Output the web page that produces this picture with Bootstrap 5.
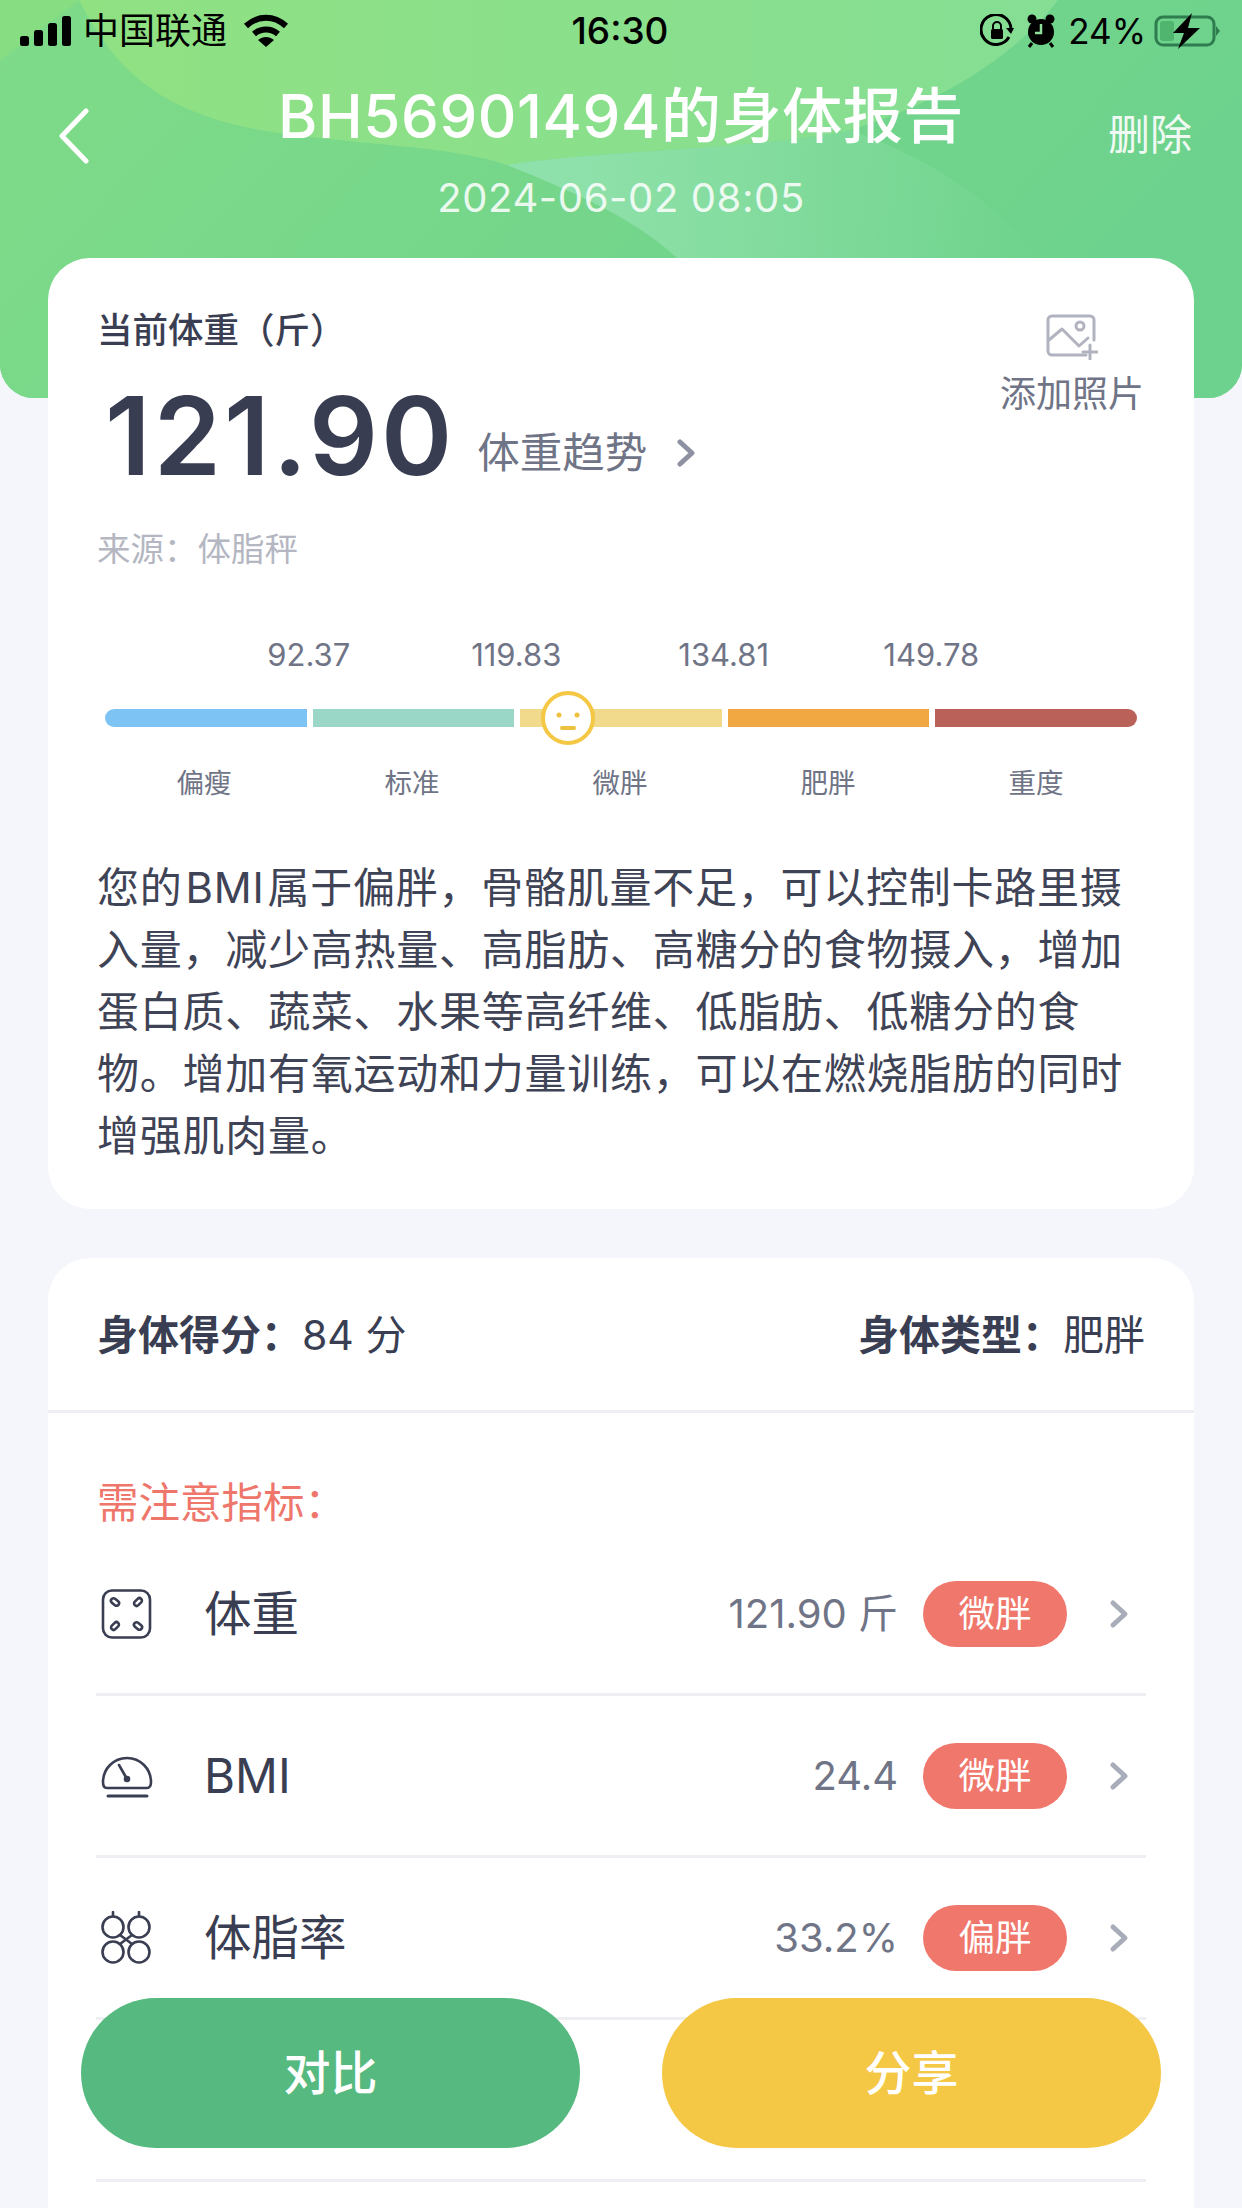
<!DOCTYPE html>
<html lang="zh-CN">
<head>
    <meta charset="UTF-8" />
    <title>身体报告</title>
    <meta name="viewport" content="width=device-width, initial-scale=1" />
    <link href="https://cdn.jsdelivr.net/npm/bootstrap@5.3.0/dist/css/bootstrap.min.css" rel="stylesheet" />
    <style>
    html, body { height: 2208px; overflow: hidden; }
    body {
      background-color: #f4f6fb;
      color: #3a3e52;
      font-family: Inter, "Noto Sans CJK SC", sans-serif;
      position: relative;
    }
    .hero {
      height: 398px;
      position: relative;
      overflow: hidden;
      border-radius: 0 0 34px 34px;
      background: #6fd48d;
      color: #fff;
    }
    .hero-bg { position: absolute; inset: 0; width: 100%; height: 100%; }
    .hero-inner { position: relative; }
    .status-bar { height: 62px; padding: 0 22px 0 20px; color: #000; font-size: 36px; }
    .status-side { width: 440px; }
    .status-time { font-weight: 500; font-size: 37px; }
    .status-pct { font-size: 35px; margin-left: 12px; }
    .status-alarm { margin-left: 12px; }
    .status-carrier { margin-left: 11px; }
    .hero-nav { padding: 0 50px; height: 176px; }
    .hero-side { width: 120px; }
    .hero-back { margin-top: 46px; padding-left: 8px; }
    .hero-title { font-size: 60px; font-weight: 500; line-height: 70px; margin-top: 19px; letter-spacing: .6px; white-space: nowrap; }
    .hero-date { font-size: 40px; line-height: 56px; margin-top: 19px; opacity: .85; letter-spacing: .6px; }
    .hero-del { font-size: 42px; margin-top: 43px; line-height: 60px; opacity: .9; text-align: right; }
    .sheet { margin: 0 48px; border: 0; border-radius: 42px; background: #fff; }
    .sheet-weight { margin-top: -140px; padding: 52px 49px 42px; position: relative; }
    .weight-label { font-size: 35.5px; line-height: 42px; font-weight: 500; }
    .weight-num { font-size: 108px; line-height: 120px; font-weight: 600; color: #383d52; letter-spacing: 3px; margin-left: 8px; }
    .weight-trend { font-size: 42.5px; color: #6f7486; margin-left: 22px; margin-top: 34px; }
    .weight-chev { margin-left: 30px; margin-top: 34px; }
    .weight-src { font-size: 33.5px; line-height: 44px; color: #b4b7c2; margin-top: 31px; }
    .add-photo-icon { margin-top: 4px; }
    .add-photo { font-size: 36px; color: #6f7486; line-height: 50px; margin-top: 9px; margin-right: 1px; }
    .scale-wrap { margin: 64px 8px 0; }
    .scale-values { height: 40px; font-size: 31px; line-height: 40px; color: #6f7486; padding: 0 100px; }
    .scale-values span { width: 207.5px; text-align: center; }
    .scale-bar { height: 18px; margin-top: 34px; gap: 6px; position: relative; }
    .scale-seg { flex: 1; }
    .scale-seg-first { border-radius: 9px 0 0 9px; }
    .scale-seg-last { border-radius: 0 9px 9px 0; }
    .scale-face { position: absolute; left: 436px; top: -18px; width: 54px; height: 54px; }
    .scale-names { margin: 38px -3px 0 -5px; font-size: 27.5px; line-height: 36px; color: #6f7486; }
    .scale-names span { flex: 1; text-align: center; }
    .summary { margin-top: 56px; font-size: 42px; line-height: 62px; letter-spacing: .75px; color: #3f4356; }
    .summary-latin { margin: 0 3px; }
    .sheet-index { margin-top: 49px; height: 951px; border-radius: 42px 42px 0 0; }
    .score-row { height: 155px; padding: 3px 49px 0; font-size: 41px; border-bottom: 3px solid #eeeff3; }
    .score-row b { font-weight: 600; }
    .alert-title { margin: 68px 49px 0; font-size: 41.5px; line-height: 44px; color: #ee766b; }
    .index-list { margin: 9px 48px 0; }
    .index-row { height: 162px; border-bottom: 3px solid #eeeff3; }
    .index-icon { width: 54px; margin-left: 4px; }
    .index-name { font-size: 47.5px; margin-left: 50px; }
    .index-val { font-size: 40px; color: #6f7486; margin-right: 25px; }
    .index-tag { width: 144px; height: 66px; line-height: 66px; padding: 0; font-size: 36.5px; font-weight: 400; background: #f0776c; margin-right: 42px; }
    .index-chev { margin-right: 17px; }
    .float-bar { position: absolute; top: 1998px; left: 81px; right: 81px; }
    .float-btn { width: 499px; height: 150px; border: 0; font-size: 47px; font-weight: 500; color: #fff; }
    .float-btn:hover { color: #fff; }
    .btn-compare { background: #56b97f; }
    .btn-share { background: #f4c744; }
  </style>
</head>
<body>

<div class="hero">
    <svg class="hero-bg" viewBox="0 0 1242 398" preserveAspectRatio="none">
        <defs>
            <linearGradient id="heroGrad" x1="0" y1="0" x2="1" y2="0.3">
                <stop offset="0" stop-color="#7fdb88" />
                <stop offset="1" stop-color="#6dd28d" />
            </linearGradient>
            <linearGradient id="heroTop" x1="0" y1="0" x2="1" y2="0">
                <stop offset="0" stop-color="#90e182" />
                <stop offset="1" stop-color="#85de94" />
            </linearGradient>
            <linearGradient id="heroWedge" x1="0" y1="0" x2="1" y2="0">
                <stop offset="0.1" stop-color="#8fe1ab" />
                <stop offset="1" stop-color="#8fe1ab" stop-opacity="0" />
            </linearGradient>
        </defs>
        <rect width="1242" height="398" fill="url(#heroGrad)" />
        <path d="M0 0H79L0 60Z" fill="#87de82" />
        <path d="M79 0C110 60 150 110 260 130C350 145 450 145 507 165C600 150 760 150 850 130C950 100 1020 50 1058 0Z" fill="url(#heroTop)" />
        <path d="M507 165C570 190 640 220 681 262H1040C1010 220 960 170 850 130C760 150 600 150 507 165Z" fill="url(#heroWedge)" />
    </svg>
    <div class="hero-inner">
        <div class="status-bar d-flex justify-content-between align-items-center">
            <div class="status-side d-flex align-items-center">
                <svg width="52" height="32" viewBox="0 0 52 32"><rect x="0" y="21" width="9" height="10" rx="2.5" /><rect x="14" y="15" width="9" height="16" rx="2.5" /><rect x="28" y="8" width="9" height="23" rx="2.5" /><rect x="42" y="1" width="9" height="30" rx="2.5" /></svg>
                <span class="status-carrier">中国联通</span>
                <svg class="ms-3" width="46" height="34" viewBox="0 0 46 34" fill="none" stroke="#000" stroke-width="6"><path d="M3 12C15 1 31 1 43 12" /><path d="M11 20C18 14 28 14 35 20" /><path d="M23 33L15 26C20 22 26 22 31 26Z" fill="#000" stroke="none" /></svg>
            </div>
            <span class="status-time">16:30</span>
            <div class="status-side d-flex align-items-center justify-content-end">
                <svg width="34" height="34" viewBox="0 0 34 34" fill="none" stroke="#000" stroke-width="3"><path d="M29 23A15 15 0 1 1 31 15" /><path d="M26 14L31 20L34 14Z" fill="#000" stroke="none" /><rect x="11" y="15" width="12" height="10" rx="1.5" fill="#000" stroke="none" /><path d="M13 15V12A4 4 0 0 1 21 12V15" stroke-width="2" /></svg>
                <svg class="status-alarm" width="30" height="34" viewBox="0 0 30 34"><circle cx="15" cy="18" r="13" /><circle cx="6" cy="5" r="4.5" /><circle cx="24" cy="5" r="4.5" /><path d="M6 29L3 33M24 29L27 33" stroke="#000" stroke-width="3" /><path d="M15 10V19H9" stroke="#8ee09a" stroke-width="2.5" fill="none" /></svg>
                <span class="status-pct">24%</span>
                <svg class="ms-2" width="66" height="36" viewBox="0 0 66 36"><rect x="2" y="4" width="58" height="28" rx="7" fill="none" stroke="#2f7d4f" stroke-width="3" /><rect x="6" y="8" width="14" height="20" rx="3" fill="#4fb56f" /><path d="M62 13L66 18L62 23Z" fill="#2f7d4f" /><path d="M38 0L19 20H30L24 36L46 15H34Z" fill="#000" /></svg>
            </div>
        </div>
        <div class="hero-nav d-flex justify-content-between align-items-start">
            <div class="hero-side hero-back">
                <svg width="32" height="56" viewBox="0 0 32 56" fill="none" stroke="#fff" stroke-width="5" stroke-linecap="round" stroke-linejoin="round"><path d="M28 3L4 28L28 53" /></svg>
            </div>
            <div class="text-center">
                <div class="hero-title">BH56901494的身体报告</div>
                <div class="hero-date">2024-06-02 08:05</div>
            </div>
            <div class="hero-side hero-del">删除</div>
        </div>
    </div>
</div>

<div class="card sheet sheet-weight">
    <div class="d-flex justify-content-between align-items-start">
        <div>
            <div class="weight-label">当前体重（斤）</div>
            <div class="d-flex align-items-center mt-4">
                <span class="weight-num">121.90</span>
                <span class="weight-trend">体重趋势</span>
                <svg class="weight-chev" width="18" height="28" viewBox="0 0 18 28" fill="none" stroke="#8d91a1" stroke-width="5" stroke-linecap="round" stroke-linejoin="round"><path d="M3 3L15 14L3 25" /></svg>
            </div>
            <div class="weight-src">来源：体脂秤</div>
        </div>
        <div class="text-center">
            <svg class="add-photo-icon" width="52" height="46" viewBox="0 0 52 46" fill="none" stroke="#b1b4c0" stroke-width="3" stroke-linecap="round" stroke-linejoin="round"><path d="M40 41H6A4 4 0 0 1 2 37V6A4 4 0 0 1 6 2H44A4 4 0 0 1 48 6V26" /><path d="M3 26L16 15L33 32L42 24" /><circle cx="34" cy="12" r="4" /><path d="M44 31V45M37 38H51" /></svg>
            <div class="add-photo">添加照片</div>
        </div>
    </div>

    <div class="scale-wrap">
        <div class="scale-values d-flex">
            <span>92.37</span><span>119.83</span><span>134.81</span><span>149.78</span>
        </div>
        <div class="scale-bar d-flex">
            <div class="scale-seg scale-seg-first" style="background:#7dc4f5"></div>
            <div class="scale-seg" style="background:#9bd7c7"></div>
            <div class="scale-seg" style="background:#f2da8d"></div>
            <div class="scale-seg" style="background:#f1a842"></div>
            <div class="scale-seg scale-seg-last" style="background:#ba625a"></div>
            <svg class="scale-face" viewBox="0 0 54 54"><circle cx="27" cy="27" r="25" fill="#fff" stroke="#f4c744" stroke-width="4" /><circle cx="18" cy="24" r="2.5" fill="#f0c040" /><circle cx="36" cy="24" r="2.5" fill="#f0c040" /><rect x="19" y="35" width="16" height="4" rx="2" fill="#f0c040" /></svg>
        </div>
        <div class="scale-names d-flex">
            <span>偏瘦</span><span>标准</span><span>微胖</span><span>肥胖</span><span>重度</span>
        </div>
    </div>

    <div class="summary">您的<span class="summary-latin">BMI</span>属于偏胖，骨骼肌量不足，可以控制卡路里摄<br />入量，减少高热量、高脂肪、高糖分的食物摄入，增加<br />蛋白质、蔬菜、水果等高纤维、低脂肪、低糖分的食<br />物。增加有氧运动和力量训练，可以在燃烧脂肪的同时<br />增强肌肉量。</div>
</div>

<div class="card sheet sheet-index">
    <div class="score-row d-flex justify-content-between align-items-center">
        <div><b>身体得分：</b>84 分</div>
        <div><b>身体类型：</b>肥胖</div>
    </div>
    <div class="alert-title">需注意指标：</div>
    <div class="index-list">
        <div class="index-row d-flex align-items-center">
            <svg class="index-icon" height="50" viewBox="0 0 54 50" fill="none" stroke="#3a3e52" stroke-width="2.6"><rect x="3" y="1.5" width="47" height="47" rx="9" /><rect x="-4.5" y="-2.5" width="9" height="5" rx="2.5" transform="translate(15 13) rotate(40)" /><rect x="-4.5" y="-2.5" width="9" height="5" rx="2.5" transform="translate(38 13) rotate(-45)" /><rect x="-4.5" y="-2.5" width="9" height="5" rx="2.5" transform="translate(15 37) rotate(-45)" /><rect x="-4.5" y="-2.5" width="9" height="5" rx="2.5" transform="translate(38 37) rotate(40)" /></svg>
            <span class="index-name">体重</span>
            <span class="index-val ms-auto">121.90 斤</span>
            <span class="badge rounded-pill index-tag">微胖</span>
            <svg class="index-chev" width="20" height="30" viewBox="0 0 20 30" fill="none" stroke="#a9adba" stroke-width="5" stroke-linecap="round" stroke-linejoin="round"><path d="M4 4L16 15L4 26" /></svg>
        </div>
        <div class="index-row d-flex align-items-center">
            <svg class="index-icon" height="46" viewBox="0 0 54 46" fill="none" stroke="#3a3e52" stroke-width="2.6" stroke-linecap="round"><path d="M3 29A24 24 0 1 1 51 29C51 33 50 35 47 35H7C4 35 3 33 3 29Z" /><path d="M19 12L27 26" /><circle cx="27" cy="26" r="2" fill="#3a3e52" /><path d="M8 43H47" stroke-width="3" /></svg>
            <span class="index-name">BMI</span>
            <span class="index-val ms-auto">24.4</span>
            <span class="badge rounded-pill index-tag">微胖</span>
            <svg class="index-chev" width="20" height="30" viewBox="0 0 20 30" fill="none" stroke="#a9adba" stroke-width="5" stroke-linecap="round" stroke-linejoin="round"><path d="M4 4L16 15L4 26" /></svg>
        </div>
        <div class="index-row d-flex align-items-center">
            <svg class="index-icon" height="54" viewBox="0 0 54 54" fill="none" stroke="#3a3e52" stroke-width="2.6" stroke-linecap="round"><circle cx="13" cy="16" r="10.5" /><circle cx="39" cy="16" r="10.5" /><circle cx="13" cy="41" r="10.5" /><circle cx="39" cy="41" r="10.5" /><path d="M13 5V1M39 5V1M20 24L32 33M32 24L20 33" /></svg>
            <span class="index-name">体脂率</span>
            <span class="index-val ms-auto">33.2%</span>
            <span class="badge rounded-pill index-tag">偏胖</span>
            <svg class="index-chev" width="20" height="30" viewBox="0 0 20 30" fill="none" stroke="#a9adba" stroke-width="5" stroke-linecap="round" stroke-linejoin="round"><path d="M4 4L16 15L4 26" /></svg>
        </div>
        <div class="index-row"></div>
    </div>
</div>

<div class="float-bar d-flex justify-content-between">
    <button type="button" class="btn rounded-pill float-btn btn-compare">对比</button>
    <button type="button" class="btn rounded-pill float-btn btn-share">分享</button>
</div>

<script src="https://cdn.jsdelivr.net/npm/bootstrap@5.3.0/dist/js/bootstrap.bundle.min.js"></script>
</body>
</html>
